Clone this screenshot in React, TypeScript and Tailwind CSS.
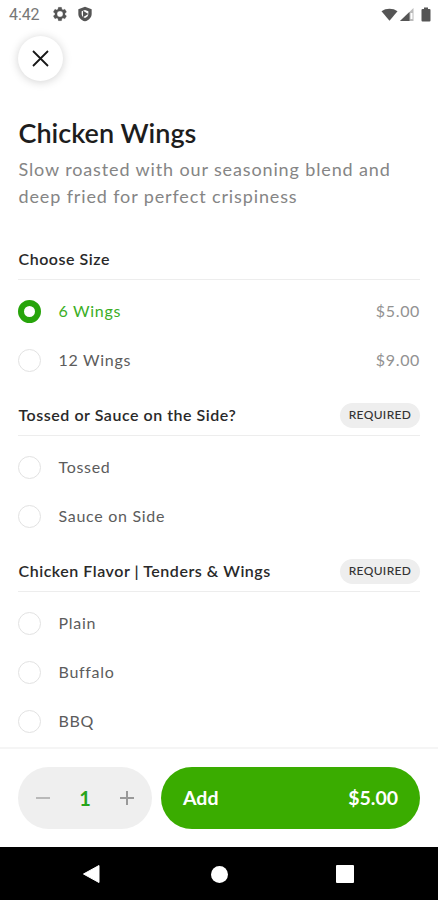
import React from 'react';

type Option = { label: string; price?: string; selected?: boolean };

function StatusBar() {
  return (
    <div className="flex h-7 items-center justify-between pr-[7px] pl-[9px] text-[#555]">
      <div className="flex items-center">
        <span className="w-[43px] pt-px font-['Roboto',sans-serif] text-[16px] leading-7 tracking-[-0.1px] text-[#777]">4:42</span>
        <svg className="h-4 w-4" viewBox="0 0 24 24" fill="currentColor" stroke="currentColor" strokeWidth="0.4">
          <path fillRule="evenodd" d="M19.4 13a7.500 7.500 0 0 0 0-2l2.100-1.700c.2-.1.3-.4.1-.6l-2-3.500c-.1-.2-.4-.3-.6-.2l-2.500 1c-.5-.4-1.100-.7-1.700-1L14.400 2.400c0-.2-.2-.4-.5-.4h-4c-.2 0-.5.2-.5.4L9 5c-.6.3-1.200.6-1.700 1l-2.500-1c-.2-.1-.5 0-.6.2l-2 3.500c-.1.2 0 .5.1.6L4.500 11a7.500 7.500 0 0 0 0 2l-2.200 1.700c-.1.1-.2.4-.1.6l2 3.500c.1.2.4.3.6.2l2.500-1c.5.4 1.100.7 1.700 1l.4 2.600c0 .2.3.4.5.4h4c.3 0 .5-.2.5-.4l.4-2.600c.6-.3 1.200-.6 1.700-1l2.500 1c.2.1.5 0 .6-.2l2-3.500c.1-.2.1-.5-.1-.6zM12 16.500a4.500 4.500 0 1 1 0-9 4.500 4.500 0 0 1 0 9z" />
        </svg>
        <svg className="ml-[9px] h-4 w-4" viewBox="0 0 24 24" fill="currentColor">
          <path fillRule="evenodd" d="M12 1 2 5v7c0 5.200 4.200 9.600 10 11 5.800-1.400 10-5.800 10-11V5zM12 6l5 2V12c0 3-2 5-5 6-3-1-5-3-5-6V8z" />
          <path d="m9 7 8 5-8 5z" />
        </svg>
      </div>
      <div className="flex items-center">
        <svg className="h-[13px] w-[17px]" viewBox="0 0 17 13" fill="currentColor">
          <path d="M0.500 3.300C5 0 12 0 16.500 3.300L8.500 12.800z" />
        </svg>
        <svg className="ml-[2px] h-[13px] w-[14px]" viewBox="0 0 14 13" fill="currentColor">
          <path d="M13.500 0v13H0z" opacity="0.4" />
          <path d="M9.500 4v9H0z" />
          <path d="M10.500 5h2v6h-2z" fill="white" />
        </svg>
        <svg className="ml-[7px] h-[15px] w-[10px]" viewBox="0 0 10 15" fill="currentColor">
          <path d="M3 0.500h4V2h1.500q1 0 1 1v10.500q0 1-1 1h-7q-1 0-1-1V3q0-1 1-1H3z" />
        </svg>
      </div>
    </div>
  );
}

function OptionRow({ label, price, selected }: Option) {
  return (
    <div className="flex h-[49px] items-center text-[16px]">
      <span
        className={
          selected
            ? 'h-[23px] w-[23px] rounded-full border-[6px] border-[#27a40b] bg-white'
            : 'h-[23px] w-[23px] rounded-full border-[1.500px] border-[#e2e2e2] bg-white'
        }
      />
      <span className={selected ? 'ml-[17.5px] pb-[2px] tracking-[0.7px] text-[#3aae25]' : 'ml-[17.5px] pb-[2px] tracking-[0.7px] text-[#5c5c5c]'}>{label}</span>
      {price && <span className="ml-auto pb-[2px] tracking-[0.65px] text-[#929292]">{price}</span>}
    </div>
  );
}

function Section({ title, required, options }: { title: string; required?: boolean; options: Option[] }) {
  return (
    <section className="pb-[10px]">
      <div className="flex h-[41px] items-center justify-between border-b border-[#ededed]">
        <h2 className="pl-[0.5px] text-[16px] font-semibold tracking-[0.53px] text-[#292929]">{title}</h2>
        {required && (
          <span className="flex h-[25px] w-20 items-center justify-center rounded-full bg-[#eeeeee] text-[12px] font-medium tracking-[0.35px] text-[#333]">
            REQUIRED
          </span>
        )}
      </div>
      <div className="pt-[7px]">
        {options.map((o) => (
          <OptionRow key={o.label} {...o} />
        ))}
      </div>
    </section>
  );
}

export default function App() {
  return (
    <div className="flex h-[900px] w-full flex-col overflow-hidden bg-white font-['Lato',sans-serif]">
      <StatusBar />
      <main className="min-h-0 flex-1 overflow-hidden px-[18px] pt-2">
        <button className="flex h-[45px] w-[45px] items-center justify-center rounded-full bg-white shadow-[0_1px_10px_rgba(0,0,0,0.18)]">
          <svg className="h-[17px] w-[17px]" viewBox="0 0 17 17" stroke="#171717" strokeWidth="1.8">
            <path d="M1 1l15 15M16 1 1 16" />
          </svg>
        </button>
        <h1 className="mt-[35px] h-[34px] pl-[0.5px] text-[27px] leading-[34px] font-semibold text-[#1d1d1d]">Chicken Wings</h1>
        <p className="mt-[6px] h-[83px] pl-[0.5px] text-[18px] leading-[27px] tracking-[0.87px] whitespace-nowrap text-[#858585]">
          Slow roasted with our seasoning blend and
          <br />
          deep fried for perfect crispiness
        </p>
        <Section title="Choose Size" options={[{ label: '6 Wings', price: '$5.00', selected: true }, { label: '12 Wings', price: '$9.00' }]} />
        <Section title="Tossed or Sauce on the Side?" required options={[{ label: 'Tossed' }, { label: 'Sauce on Side' }]} />
        <Section title="Chicken Flavor | Tenders & Wings" required options={[{ label: 'Plain' }, { label: 'Buffalo' }, { label: 'BBQ' }]} />
      </main>
      <footer className="flex h-[100px] shrink-0 gap-[9px] border-t-2 border-[#f5f5f5] px-[18px] pt-[18px]">
        <div className="flex h-[62px] w-[134px] items-center justify-between rounded-full bg-[#efefef] px-[18px]">
          <svg className="h-[14px] w-[14px]" viewBox="0 0 14 14" stroke="#b9b9b9" strokeWidth="2">
            <path d="M0 7h14" />
          </svg>
          <span className="text-[20px] font-bold text-[#27a51b]">1</span>
          <svg className="h-[14px] w-[14px]" viewBox="0 0 14 14" stroke="#999" strokeWidth="2">
            <path d="M0 7h14M7 0v14" />
          </svg>
        </div>
        <button className="flex h-[62px] flex-1 items-center justify-between rounded-full bg-[#3aac00] px-[22px] text-[19.500px] font-bold text-white">
          <span>Add</span>
          <span>$5.00</span>
        </button>
      </footer>
      <nav className="flex h-[53px] shrink-0 items-center bg-black pt-px pl-[83px] text-white">
        <svg className="h-[18px] w-[17px]" viewBox="0 0 17 18" fill="currentColor">
          <path d="M16 0.500v17L0.500 9z" stroke="currentColor" strokeLinejoin="round" />
        </svg>
        <span className="ml-[111px] h-[17px] w-[17px] rounded-full bg-white" />
        <span className="ml-[108px] h-[18px] w-[18px] rounded-[1px] bg-white" />
      </nav>
    </div>
  );
}
